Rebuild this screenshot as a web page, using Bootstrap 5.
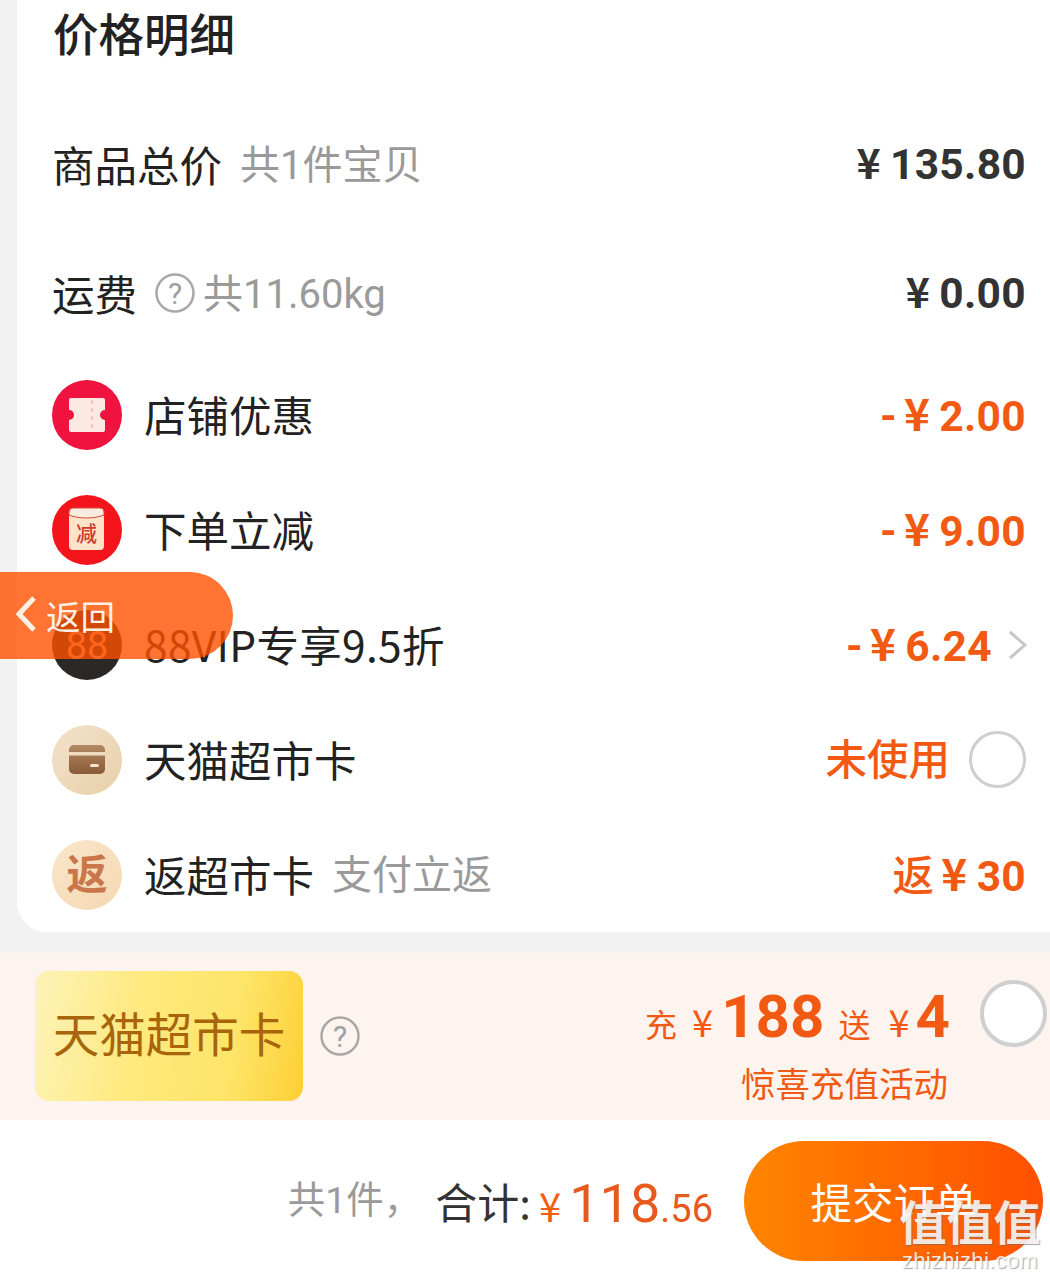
<!DOCTYPE html>
<html lang="zh-CN">
<head>
    <meta charset="UTF-8">
    <meta name="viewport" content="width=device-width, initial-scale=1.0">
    <title>价格明细</title>
    <link href="https://cdn.jsdelivr.net/npm/bootstrap@5.3.0/dist/css/bootstrap.min.css" rel="stylesheet">
    <style>
        html, body { height: 1275px; overflow: hidden; }
        body { background: #f2f2f2; font-family: Roboto, "Noto Sans CJK SC", sans-serif; color: #222; }
        .screen { width: 1050px; height: 1275px; overflow: hidden; }
        .price-card { margin-left: 17px; height: 932px; background: #fff; border-radius: 0 0 0 30px; padding: 0 24px 0 36px; }
        .card-title { height: 99px; margin: 0; padding: 0; font-size: 45.5px; line-height: 64px; font-weight: 500; font-family: "Noto Sans CJK SC", sans-serif; color: #222; }
        .row-first { height: 130px; }
        .row-second { height: 128px; }
        .row-icon { height: 115px; }
        .row-name { font-family: "Noto Sans CJK SC", sans-serif; font-size: 42.5px; line-height: 1; color: #222; margin-left: -1px; margin-right: 18px; }
        .row-name-wide { letter-spacing: .3px; }
        .row-note { font-family: Roboto, "Noto Sans CJK SC", sans-serif; font-size: 40px; line-height: 1; color: #9a9a9a; padding-top: 3px; }
        .row-amount { font-size: 42.5px; font-weight: 700; line-height: 1; color: #333; letter-spacing: .3px; white-space: nowrap; }
        .row-amount .cny { font-family: "Noto Sans CJK SC", sans-serif; font-weight: 700; margin: 0 9px 0 5px; font-size: 41px; }
        .is-off { color: #f25a14; }
        .is-off .cny { font-size: 44px; margin-left: 7px; }
        .off-text { font-family: "Noto Sans CJK SC", Roboto, sans-serif; font-size: 41.5px; font-weight: 500; color: #f25a14; line-height: 1; padding-bottom: 4px; }
        .off-gap { margin-right: 19px; }
        .help-icon { margin-right: 8px; }
        .row-chevron { margin-left: 16px; margin-right: -2px; }
        .round-icon { width: 70px; height: 70px; flex: none; display: block; margin-left: -1px; margin-right: 23px; }
        .radio-ring { width: 57px; height: 57px; flex: none; border: 3px solid #cfcfcf; border-radius: 50%; background: #fff; }
        .promo-band { margin-top: 21px; height: 167px; background: #fdf3ef; padding: 18px 3px 0 35px; }
        .gold-card { width: 268px; height: 130px; border-radius: 14px; background: linear-gradient(100deg, #fdf3b8 0%, #fee97c 40%, #fde56a 72%, #fdcf35 100%); color: #a8650c; font-family: "Noto Sans CJK SC", sans-serif; font-size: 46.5px; line-height: 1; padding-bottom: 8px; }
        .gold-help { margin: 44px 0 0 16px; }
        .promo-lines { margin-left: auto; margin-right: 30px; padding-top: 13px; color: #f25a14; font-family: "Noto Sans CJK SC", sans-serif; }
        .promo-top { font-size: 32px; line-height: 66px; height: 66px; white-space: nowrap; }
        .promo-top b { font-family: Roboto, sans-serif; font-size: 60px; font-weight: 700; }
        .promo-cny { font-size: 38px; }
        .promo-first { margin-right: 15px; }
        .promo-188 { margin-right: 14px; }
        .promo-give { margin-right: 18px; }
        .promo-cny-last { margin-right: 6px; }
        .promo-sub { font-size: 34.5px; line-height: 1; margin-top: 15px; padding-right: 2px; text-align: right; }
        .promo-ring { width: 67px; height: 67px; flex: none; border: 4px solid #cfcfcf; border-radius: 50%; background: #fff; margin-top: 9px; }
        .pay-bar { height: 155px; background: #fff; padding: 7px 7px 0 0; }
        .pay-count { font-family: Roboto, "Noto Sans CJK SC", sans-serif; font-size: 37.5px; color: #9a9a9a; margin-right: 14px; line-height: 1; }
        .pay-label { font-family: "Noto Sans CJK SC", sans-serif; font-size: 42px; color: #333; line-height: 1; }
        .pay-total { font-family: Roboto, sans-serif; color: #e8591c; line-height: 1; margin-left: 8px; margin-right: 31px; padding-top: 6px; white-space: nowrap; }
        .pay-total .cny { font-family: "Noto Sans CJK SC", sans-serif; font-size: 40px; margin-right: 8px; color: #f2600f; }
        .pay-total .whole { font-size: 54px; }
        .pay-total .cents { font-size: 38px; }
        .pay-btn { width: 299px; height: 120px; border: 0; border-radius: 60px; background: linear-gradient(90deg, #ff8500, #ff5000); color: #fff; font-family: "Noto Sans CJK SC", sans-serif; font-size: 41.5px; }
        .back-tab { position: absolute; left: 0; top: 572px; width: 233px; height: 87px; border-radius: 0 44px 44px 0; background: rgba(255, 80, 0, .8); color: #fdf1e6; font-family: "Noto Sans CJK SC", sans-serif; font-size: 34.5px; padding-left: 14px; }
        .back-tab svg { margin-right: 8px; margin-bottom: 4px; }
        .wm-mark { position: absolute; left: 895px; top: 1190px; width: 150px; text-align: center; color: rgba(255, 255, 255, .85); text-shadow: 1px 1px 1px rgba(110, 110, 110, .6); pointer-events: none; }
        .wm-big { font-family: "Noto Sans CJK SC", sans-serif; font-size: 47px; font-weight: 700; line-height: 60px; white-space: nowrap; }
        .wm-small { font-family: "Liberation Sans", sans-serif; font-size: 22px; line-height: 22px; letter-spacing: .3px; }
    </style>
</head>
<body>
    <div class="screen position-relative">
        <div class="price-card">
            <h2 class="card-title">价格明细</h2>

            <div class="d-flex align-items-center row-first">
                <span class="row-name">商品总价</span>
                <span class="row-note">共1件宝贝</span>
                <span class="row-amount ms-auto"><span class="cny">¥</span>135.80</span>
            </div>
            <div class="d-flex align-items-center row-second">
                <span class="row-name">运费</span>
                <svg class="help-icon" width="40" height="40" viewBox="0 0 40 40"><circle cx="20" cy="20" r="18.500" fill="none" stroke="#a8a8a8" stroke-width="2.500"/><text x="20" y="31" text-anchor="middle" font-family="Roboto" font-size="30" fill="#a0a0a0">?</text></svg>
                <span class="row-note">共11.60kg</span>
                <span class="row-amount ms-auto"><span class="cny">¥</span>0.00</span>
            </div>

            <div class="d-flex align-items-center row-icon">
                <svg class="round-icon" viewBox="0 0 70 70"><circle cx="35" cy="35" r="35" fill="#f0133f"/><path d="M19 18h32a2 2 0 0 1 2 2v10a5 5 0 0 0 0 10v10a2 2 0 0 1-2 2H19a2 2 0 0 1-2-2V40a5 5 0 0 0 0-10V20a2 2 0 0 1 2-2z" fill="#fbe9e2"/><path d="M40 20v30" stroke="#f3c4ba" stroke-width="2" stroke-dasharray="4 4"/></svg>
                <span class="row-name">店铺优惠</span>
                <span class="row-amount is-off ms-auto">-<span class="cny">¥</span>2.00</span>
            </div>
            <div class="d-flex align-items-center row-icon">
                <svg class="round-icon" viewBox="0 0 70 70"><circle cx="35" cy="35" r="35" fill="#f4141c"/><rect x="17" y="13" width="35" height="42" rx="4" fill="#fde3c8"/><path d="M17 17a4 4 0 0 1 4-4h27a4 4 0 0 1 4 4v3c-10 4-25 4-35 0z" fill="#f9ecdf" stroke="#d9483a" stroke-width="1"/><text x="34.500" y="46" text-anchor="middle" font-family="Noto Sans CJK SC" font-weight="500" font-size="21" fill="#cf3a30">减</text></svg>
                <span class="row-name">下单立减</span>
                <span class="row-amount is-off ms-auto">-<span class="cny">¥</span>9.00</span>
            </div>
            <div class="d-flex align-items-center row-icon">
                <svg class="round-icon" viewBox="0 0 70 70"><circle cx="35" cy="35" r="35" fill="#2b2826"/><text x="35" y="49" text-anchor="middle" font-family="Roboto" font-size="38" fill="#e9b98e">88</text></svg>
                <span class="row-name row-name-wide">88VIP专享9.5折</span>
                <span class="row-amount is-off ms-auto">-<span class="cny">¥</span>6.24</span>
                <svg class="row-chevron" width="20" height="30" viewBox="0 0 20 30"><path d="M2 2l15 13L2 28" fill="none" stroke="#c8c8c8" stroke-width="3"/></svg>
            </div>
            <div class="d-flex align-items-center row-icon">
                <svg class="round-icon" viewBox="0 0 70 70"><defs><linearGradient id="tanA" x1="0" y1="0" x2="1" y2="1"><stop offset="0" stop-color="#f3e2cb"/><stop offset="1" stop-color="#e8cfa8"/></linearGradient><linearGradient id="walA" x1="0" y1="0" x2="0" y2="1"><stop offset="0" stop-color="#b08a64"/><stop offset="1" stop-color="#8b5a38"/></linearGradient></defs><circle cx="35" cy="35" r="35" fill="url(#tanA)"/><rect x="17" y="20" width="36" height="29" rx="5" fill="url(#walA)"/><rect x="17" y="27" width="36" height="3.500" fill="#f0dcc0"/><rect x="38" y="39" width="9" height="3" rx="1.500" fill="#f5e6d0"/></svg>
                <span class="row-name">天猫超市卡</span>
                <span class="off-text off-gap ms-auto">未使用</span>
                <span class="radio-ring"></span>
            </div>
            <div class="d-flex align-items-center row-icon">
                <svg class="round-icon" viewBox="0 0 70 70"><defs><linearGradient id="tanB" x1="0" y1="0" x2="1" y2="1"><stop offset="0" stop-color="#f8e6cc"/><stop offset="1" stop-color="#f6d8b0"/></linearGradient></defs><circle cx="35" cy="35" r="35" fill="url(#tanB)"/><text x="35" y="49" text-anchor="middle" font-family="Noto Sans CJK SC" font-weight="700" font-size="41" fill="#c9764a">返</text></svg>
                <span class="row-name">返超市卡</span>
                <span class="row-note">支付立返</span>
                <span class="row-amount is-off ms-auto"><span class="off-text">返</span><span class="cny">¥</span>30</span>
            </div>
        </div>

        <div class="promo-band d-flex align-items-start">
            <div class="gold-card d-flex align-items-center justify-content-center">天猫超市卡</div>
            <svg class="gold-help" width="42" height="42" viewBox="0 0 42 42"><circle cx="21" cy="21" r="18.500" fill="none" stroke="#a8a8a8" stroke-width="2.500"/><text x="21" y="32" text-anchor="middle" font-family="Roboto" font-size="30" fill="#a0a0a0">?</text></svg>
            <div class="promo-lines">
                <div class="promo-top d-flex align-items-baseline justify-content-end">
                    <span class="promo-first">充</span><span class="promo-cny me-2">¥</span><b class="promo-188">188</b><span class="promo-give">送</span><span class="promo-cny promo-cny-last">¥</span><b>4</b>
                </div>
                <div class="promo-sub">惊喜充值活动</div>
            </div>
            <div class="promo-ring"></div>
        </div>

        <div class="pay-bar d-flex align-items-center justify-content-end">
            <span class="pay-count">共1件，</span>
            <span class="pay-label">合计:</span>
            <span class="pay-total"><span class="cny">¥</span><span class="whole">118</span><span class="cents">.56</span></span>
            <button type="button" class="btn pay-btn">提交订单</button>
        </div>

        <div class="back-tab d-flex align-items-center">
            <svg width="24" height="38" viewBox="0 0 24 38"><path d="M20 3L5 19l15 16" fill="none" stroke="#fdf1e6" stroke-width="5"/></svg>
            <span>返回</span>
        </div>
        <div class="wm-mark">
            <div class="wm-big">值值值</div>
            <div class="wm-small">zhizhizhi.com</div>
        </div>
    </div>
    <script src="https://cdn.jsdelivr.net/npm/bootstrap@5.3.0/dist/js/bootstrap.bundle.min.js"></script>
</body>
</html>
